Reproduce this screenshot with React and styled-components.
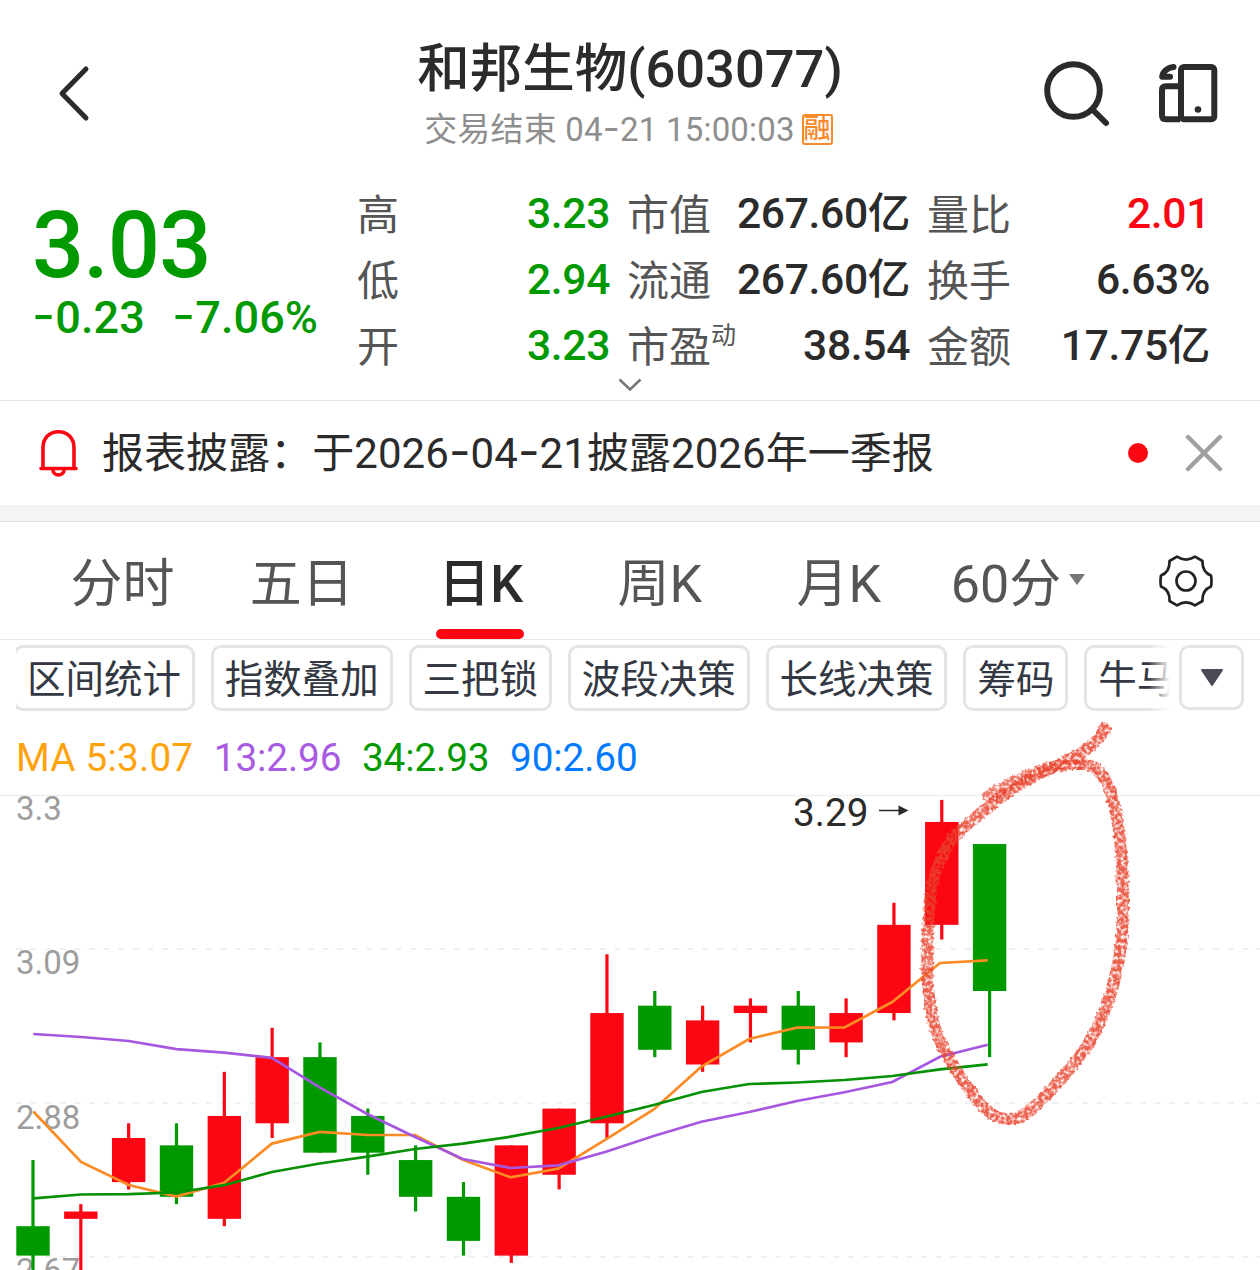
import React from 'react';
import styled, { createGlobalStyle } from 'styled-components';

const GREEN = '#009900';
const RED = '#fb0612';
const INK = '#2b2b2b';

const GlobalStyle = createGlobalStyle`
    * {
        box-sizing: border-box;
    }
    body {
        margin: 0;
        background: #fff;
        color: ${INK};
        font-family: Roboto, "Noto Sans CJK SC", sans-serif;
    }
`;

const Page = styled.div`
    width: 1260px;
    height: 1270px;
    overflow: hidden;
    background: #fff;
    white-space: nowrap;
`;

// Roboto's hyphen is too short between digits
const Dash = styled.span`
    font-family: Inter, sans-serif;
    font-size: 1.12em;
    font-weight: 400;
    line-height: 0;
`;

const Digits = ({ children }) => (
    children.split('-').map((part, i) => (
        <React.Fragment key={i}>
            {i > 0 && <Dash>-</Dash>}
            {part}
        </React.Fragment>
    ))
);

/* header */

const Header = styled.header`
    display: grid;
    grid-template-columns: 320px 620px 320px;
    height: 180px;
`;

const HeaderSide = styled.div`
    display: flex;
    align-items: flex-start;
    gap: 47px;
    padding: ${props => props.pad};
    svg:nth-child(2) {
        margin-top: 3px;
    }
`;

const HeaderTitle = styled.div`
    display: flex;
    flex-direction: column;
    align-items: center;
    padding-top: 38px;
`;

const StockName = styled.h1`
    margin: 0;
    font-size: 52.5px;
    font-weight: 460;
    line-height: 63px;
`;

const Status = styled.div`
    display: flex;
    align-items: center;
    gap: 7px;
    margin-right: 3px;
    color: #8e8e8e;
    font-size: 33px;
    line-height: 57px;
    letter-spacing: 0.2px;
`;

const MarginTag = styled.span`
    width: 31px;
    height: 31px;
    border: 2px solid #f9892b;
    border-radius: 3px;
    color: #f9892b;
    font-size: 27px;
    font-weight: 500;
    line-height: 26px;
    letter-spacing: 0;
    text-align: center;
    text-indent: -0.5px;
`;

/* quote */

const Quote = styled.section`
    display: grid;
    grid-template-columns: 305px 252px 282px 282px;
    column-gap: 18px;
    height: 198px;
    padding-left: 35px;
`;

const PriceBlock = styled.div`
    color: ${GREEN};
    font-weight: 460;
    padding-top: 21px;
`;

const Price = styled.div`
    font-size: 92px;
    line-height: 90px;
    letter-spacing: -1px;
    margin-left: -3px;
`;

const Change = styled.div`
    display: flex;
    gap: 27px;
    font-size: 45px;
    line-height: 54px;
    margin-left: -3px;
    letter-spacing: 0.1px;
`;

const StatColumn = styled.dl`
    margin: 0;
`;

const Stat = styled.div`
    display: flex;
    justify-content: space-between;
    height: 66px;
    font-size: 42px;
    line-height: 66px;
`;

const StatLabel = styled.dt`
    margin-left: -1px;
    padding-top: 3px;
    color: #555;
    sup {
        font-size: 25px;
        line-height: 0;
        vertical-align: 18px;
    }
`;

const StatValue = styled.dd`
    margin: 0;
    color: ${props => props.color || INK};
    font-size: 42.6px;
    font-weight: 460;
    letter-spacing: -0.35px;
`;

const Expand = styled.div`
    display: flex;
    justify-content: center;
    height: 23px;
    border-bottom: 1px solid #e6e6e6;
`;

/* notice */

const Notice = styled.section`
    display: flex;
    align-items: center;
    height: 104px;
    padding: 0 37px 0 38px;
`;

const NoticeText = styled.p`
    flex: 1;
    margin: 2px 0 0 23px;
    font-size: 42px;
    line-height: 104px;
    letter-spacing: 0.05px;
`;

const UnreadDot = styled.span`
    width: 20px;
    height: 20px;
    margin-right: 37px;
    border-radius: 50%;
    background: #fb0612;
`;

const Divider = styled.div`
    height: 17px;
    background: #f4f4f4;
    border-bottom: 1px solid #e4e4e4;
`;

/* period tabs */

const Tabs = styled.nav`
    display: flex;
    align-items: stretch;
    height: 118px;
    padding-left: 33px;
    border-bottom: 1px solid #e8e8e8;
`;

const Tab = styled.div`
    position: relative;
    display: flex;
    align-items: center;
    justify-content: center;
    gap: 8px;
    width: 179.1px;
    padding-bottom: 2px;
    color: ${props => props.$active ? INK : '#555'};
    font-size: 52px;
    font-weight: ${props => props.$active ? 500 : 400};
    &::after {
        content: '';
        display: ${props => props.$active ? 'block' : 'none'};
        position: absolute;
        left: 45px;
        right: 46px;
        bottom: 0;
        height: 10px;
        border-radius: 5px;
        background: ${RED};
    }
`;

const Settings = styled.div`
    display: flex;
    align-items: center;
    margin-left: 51px;
`;

/* indicator chips */

const ChipBar = styled.div`
    display: flex;
    align-items: flex-start;
    gap: 9px;
    height: 80px;
    padding: 5px 16px 0;
`;

const ChipStrip = styled.div`
    position: relative;
    display: flex;
    gap: 16px;
    width: 1154px;
    overflow: hidden;
    &::after {
        content: '';
        position: absolute;
        right: 0;
        top: 0;
        width: 22px;
        height: 66px;
        background: linear-gradient(to right, rgba(255, 255, 255, 0), #fff);
    }
`;

const Chip = styled.button`
    flex: none;
    height: 66px;
    padding: 4px 10.9px 0;
    border: 3px solid #e3e4e6;
    border-radius: 10px;
    background: #fff;
    color: #333842;
    font-family: inherit;
    font-size: 38.5px;
    line-height: 56px;
    &:first-child {
        margin-left: -3px;
    }
`;

const MoreButton = styled.button`
    display: flex;
    align-items: center;
    justify-content: center;
    width: 65px;
    height: 65px;
    padding: 0;
    border: 3px solid #e3e4e6;
    border-radius: 10px;
    background: #fff;
`;

/* chart */

const Averages = styled.div`
    display: flex;
    gap: 20.5px;
    height: 70px;
    padding-left: 16px;
    font-size: 38.7px;
    line-height: 76px;
`;

const Average = styled.span`
    color: ${props => props.color};
    letter-spacing: ${props => props.$spacing};
`;

const ChartArea = styled.div`
    position: relative;
    height: 480px;
`;

const ChartSvg = styled.svg`
    display: block;
    text {
        font-family: Roboto, sans-serif;
    }
`;

// hand drawn mark lying over the candles and the legend above them
const Marker = styled.svg`
    position: absolute;
    left: 900px;
    top: -80px;
`;

const stats = [
    [
        { label: '高', value: '3.23', color: GREEN },
        { label: '低', value: '2.94', color: GREEN },
        { label: '开', value: '3.23', color: GREEN },
    ],
    [
        { label: '市值', value: '267.60亿' },
        { label: '流通', value: '267.60亿' },
        { label: '市盈', note: '动', value: '38.54' },
    ],
    [
        { label: '量比', value: '2.01', color: '#fb0612' },
        { label: '换手', value: '6.63%' },
        { label: '金额', value: '17.75亿' },
    ],
];

const tabs = ['分时', '五日', '日K', '周K', '月K'];
const chips = ['区间统计', '指数叠加', '三把锁', '波段决策', '长线决策', '筹码', '牛马线'];

const averages = [
    { text: 'MA 5:3.07', color: '#ffa30d', spacing: '0.2px' },
    { text: '13:2.96', color: '#a95ce2', spacing: '-0.1px' },
    { text: '34:2.93', color: GREEN, spacing: '-0.1px' },
    { text: '90:2.60', color: '#007bff', spacing: '-0.1px' },
];

// [up, body top, body bottom, high, low]
const candles = [
    [0, 2.71, 2.67, 2.80, 2.60],
    [1, 2.73, 2.72, 2.74, 2.60],
    [1, 2.83, 2.77, 2.85, 2.76],
    [0, 2.82, 2.75, 2.85, 2.74],
    [1, 2.86, 2.72, 2.92, 2.71],
    [1, 2.94, 2.85, 2.98, 2.83],
    [0, 2.94, 2.81, 2.96, 2.81],
    [0, 2.86, 2.81, 2.87, 2.78],
    [0, 2.80, 2.75, 2.82, 2.73],
    [0, 2.75, 2.69, 2.77, 2.67],
    [1, 2.82, 2.67, 2.82, 2.66],
    [1, 2.87, 2.78, 2.87, 2.76],
    [1, 3.00, 2.85, 3.08, 2.83],
    [0, 3.01, 2.95, 3.03, 2.94],
    [1, 2.99, 2.93, 3.01, 2.92],
    [1, 3.01, 3.00, 3.02, 2.96],
    [0, 3.01, 2.95, 3.03, 2.93],
    [1, 3.00, 2.96, 3.02, 2.94],
    [1, 3.12, 3.00, 3.15, 2.99],
    [1, 3.26, 3.12, 3.29, 3.10],
    [0, 3.23, 3.03, 3.23, 2.94],
];

const lines = [
    {
        color: '#fb8b24',
        ys: [1111.5, 1162, 1185, 1196.6, 1182.8, 1143.6, 1131.9, 1135, 1135, 1159.7, 1177.3, 1168.7, 1139.3, 1109.5, 1066.7, 1039, 1027.7, 1027.5, 1002, 963, 960.3],
    },
    {
        color: '#a657e0',
        ys: [1034, 1037, 1041, 1049.2, 1052.7, 1057.8, 1087.4, 1114, 1137, 1159, 1168, 1165.3, 1151.7, 1136, 1121.7, 1112, 1101, 1092.3, 1082, 1056.7, 1044.7],
    },
    {
        color: '#069006',
        ys: [1198.3, 1194.5, 1194.2, 1192.5, 1185.2, 1172, 1163.5, 1156.7, 1149, 1143.7, 1136.7, 1128, 1116.7, 1105, 1092, 1084, 1082.5, 1080, 1076, 1069.3, 1064.3],
    },
];

const candleX = i => 33 + i * 47.83;
const priceY = p => 844 + (3.23 - p) * 735;

const BackIcon = () => (
    <svg width="34" height="58" viewBox="0 0 34 58" fill="none" stroke={INK} strokeWidth="5" strokeLinecap="round" strokeLinejoin="round">
        <path d="M29 4 L5 28.5 L29 53" />
    </svg>
);

const SearchIcon = () => (
    <svg width="68" height="68" viewBox="0 0 68 68" fill="none" stroke={INK} strokeWidth="6" strokeLinecap="round">
        <circle cx="30.5" cy="30.5" r="26.3" />
        <path d="M50 50 L63 63" />
    </svg>
);

const PhonesIcon = () => (
    <svg width="60" height="60" viewBox="0 0 60 60" fill="none" stroke={INK} strokeWidth="6" strokeLinejoin="round">
        <rect x="23" y="4" width="33.3" height="52.3" rx="3" />
        <path d="M22 23.3 H8 Q4 23.3 4 27 V52.3 Q4 56.3 8 56.3 H22" />
        <path d="M15.5 4 C9.5 4.5 4.5 9 4.2 13.8 H12" strokeLinecap="round" />
        <circle cx="40" cy="46.5" r="3.3" fill={INK} stroke="none" />
    </svg>
);

const BellIcon = () => (
    <svg width="41" height="48" viewBox="0 0 41 48" fill="none" stroke="#fb0612" strokeWidth="3.6" strokeLinecap="round">
        <path d="M5 39 V19 C5 9 11.5 2.7 20.5 2.7 C29.5 2.7 36 9 36 19 V39" />
        <path d="M3 39.5 H38" />
        <path d="M15 41 C15 47.5 26 47.5 26 41" />
    </svg>
);

const CloseIcon = () => (
    <svg width="38" height="38" viewBox="0 0 38 38" fill="none" stroke="#a0a0a0" strokeWidth="4.4" strokeLinecap="round">
        <path d="M3 3 L35 35 M35 3 L3 35" />
    </svg>
);

const GearIcon = () => (
    <svg width="54" height="54" viewBox="-27 -27 54 54" fill="none" stroke="#222" strokeWidth="2.7" strokeLinejoin="round">
        <path d="M-9 -24.3 Q0 -18.5 9 -24.3 L16.5 -20 Q16 -9 25 -5.5 Q26 0 25 5.5 Q16 9 16.5 20 L9 24.3 Q0 18.5 -9 24.3 L-16.5 20 Q-16 9 -25 5.5 Q-26 0 -25 -5.5 Q-16 -9 -16.5 -20 Z" />
        <circle r="9.5" />
    </svg>
);

const CandleChart = () => (
    <ChartArea>
        <ChartSvg width="1260" height="480" viewBox="0 790 1260 480">
            <path d="M0 795.5 H1260" stroke="#efefef" strokeWidth="1.5" />
            {[949, 1103, 1256.7].map(y => (
                <path key={y} d={`M16 ${y} H1260`} stroke="#ececec" strokeWidth="1.5" strokeDasharray="6 8.6" />
            ))}
            <g fill="#9d9d9d" fontSize="33">
                <text x="16" y="820">3.3</text>
                <text x="16" y="974">3.09</text>
                <text x="16" y="1129">2.88</text>
                <text x="16" y="1282">2.67</text>
            </g>
            {candles.map(([up, top, bottom, high, low], i) => (
                <g key={i} fill={up ? RED : GREEN}>
                    <rect x={candleX(i) - 1.6} y={priceY(high)} width="3.2" height={priceY(low) - priceY(high)} />
                    <rect x={candleX(i) - 16.7} y={priceY(top)} width="33.4" height={priceY(bottom) - priceY(top)} />
                </g>
            ))}
            {lines.map(line => (
                <polyline
                    key={line.color}
                    points={line.ys.map((y, i) => `${33.3 + i * 47.72},${y}`).join(' ')}
                    fill="none"
                    stroke={line.color}
                    strokeWidth="2.7"
                />
            ))}
            <text x="793" y="826" fontSize="38.7" fill={INK}>3.29</text>
            <path d="M879 810.5 H900" stroke={INK} strokeWidth="1.5" />
            <path d="M898.5 805.5 L908.5 810.5 L898.5 815.5 Z" fill={INK} />
        </ChartSvg>
        <Marker width="250" height="440" viewBox="900 710 250 440">
            <filter id="crayon" x="-10%" y="-10%" width="120%" height="120%" colorInterpolationFilters="sRGB">
                <feTurbulence type="fractalNoise" baseFrequency="0.28" numOctaves="2" seed="4" result="noise" />
                <feDisplacementMap in="SourceGraphic" in2="noise" scale="5" xChannelSelector="R" yChannelSelector="G" result="rough" />
                <feColorMatrix in="noise" type="matrix" values="0 0 0 0 0  0 0 0 0 0  0 0 0 0 0  0 0 2.6 0 -0.55" result="grain" />
                <feComposite in="rough" in2="grain" operator="in" />
                <feGaussianBlur stdDeviation="0.45" />
            </filter>
            <g fill="none" stroke="#e8452f" strokeWidth="12" strokeLinecap="round" strokeLinejoin="round">
                <path
                    filter="url(#crayon)"
                    opacity="0.85"
                    d="M1105 728 C1098 745 1078 757 1045 771 C1015 784 980 812 953 838 C935 862 929 890 928 930 C926 980 927 1015 943 1047 C955 1070 968 1090 983 1107 C1000 1124 1018 1122 1033 1108 C1050 1092 1078 1062 1092 1038 C1112 1000 1124 955 1123 905 C1123 860 1119 820 1112 797 C1105 773 1095 763 1078 764"
                />
                <path filter="url(#crayon)" opacity="0.75" d="M1078 764 C1055 763 1025 774 988 796" />
            </g>
        </Marker>
    </ChartArea>
);

const App = () => (
    <Page>
        <GlobalStyle />
        <Header>
            <HeaderSide pad="65px 0 0 57px">
                <BackIcon />
            </HeaderSide>
            <HeaderTitle>
                <StockName>和邦生物(603077)</StockName>
                <Status>
                    <span><Digits>交易结束 04-21 15:00:03</Digits></span>
                    <MarginTag>融</MarginTag>
                </Status>
            </HeaderTitle>
            <HeaderSide pad="60px 0 0 103px">
                <SearchIcon />
                <PhonesIcon />
            </HeaderSide>
        </Header>
        <Quote>
            <PriceBlock>
                <Price>3.03</Price>
                <Change>
                    <span><Digits>-0.23</Digits></span>
                    <span><Digits>-7.06%</Digits></span>
                </Change>
            </PriceBlock>
            {stats.map((column, i) => (
                <StatColumn key={i}>
                    {column.map(stat => (
                        <Stat key={stat.label}>
                            <StatLabel>{stat.label}{stat.note && <sup>{stat.note}</sup>}</StatLabel>
                            <StatValue color={stat.color}>{stat.value}</StatValue>
                        </Stat>
                    ))}
                </StatColumn>
            ))}
        </Quote>
        <Expand>
            <svg width="24" height="14" viewBox="0 0 24 14" fill="none" stroke="#777" strokeWidth="2.6">
                <path d="M1.5 1.5 L12 11.5 L22.5 1.5" />
            </svg>
        </Expand>
        <Notice>
            <BellIcon />
            <NoticeText><Digits>报表披露：于2026-04-21披露2026年一季报</Digits></NoticeText>
            <UnreadDot />
            <CloseIcon />
        </Notice>
        <Divider />
        <Tabs>
            {tabs.map(tab => <Tab key={tab} $active={tab === '日K'}>{tab}</Tab>)}
            <Tab>
                60分
                <svg width="16" height="12" viewBox="0 0 16 12"><path d="M0 0 H16 L8 11 Z" fill="#777" /></svg>
            </Tab>
            <Settings><GearIcon /></Settings>
        </Tabs>
        <ChipBar>
            <ChipStrip>
                {chips.map(chip => <Chip key={chip}>{chip}</Chip>)}
            </ChipStrip>
            <MoreButton>
                <svg width="24" height="18" viewBox="0 0 24 18"><path d="M2 1 H22 L12 16 Z" fill="#4a4b55" stroke="#4a4b55" strokeWidth="2" strokeLinejoin="round" /></svg>
            </MoreButton>
        </ChipBar>
        <Averages>
            {averages.map(item => (
                <Average key={item.text} color={item.color} $spacing={item.spacing}>{item.text}</Average>
            ))}
        </Averages>
        <CandleChart />
    </Page>
);

export default App;
